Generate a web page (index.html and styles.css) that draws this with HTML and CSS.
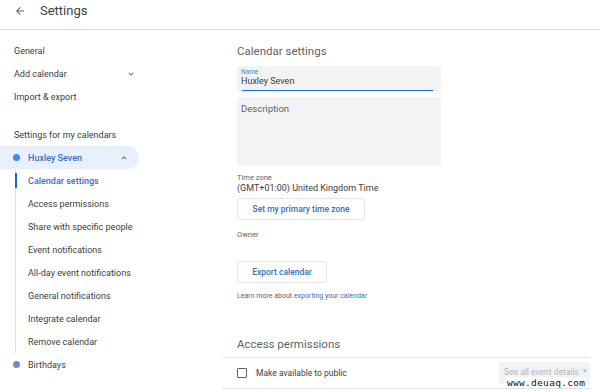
FILE: index.html
```html
<!DOCTYPE html>
<html>
<head>
<meta charset="utf-8">
<link rel="stylesheet" href="styles.css">
</head>
<body>
<header class="topbar">
  <svg class="back" width="12" height="12" viewBox="0 0 24 24"><path d="M20 11H7.83l5.59-5.59L12 4l-8 8 8 8 1.410-1.41L7.83 13H20v-2z" fill="#5f6368"/></svg>
  <span class="title">Settings</span>
</header>
<div class="page">
  <nav class="side">
    <div class="item">General</div>
    <div class="item row">Add calendar <svg class="chev" width="10" height="10" viewBox="0 0 24 24"><path d="M7.41 8.59 12 13.17l4.59-4.58L18 10l-6 6-6-6z" fill="#5f6368"/></svg></div>
    <div class="item">Import &amp; export</div>
    <div class="section">Settings for my calendars</div>
    <div class="cal active"><span class="dot"></span>Huxley Seven<svg class="chev up" width="10" height="10" viewBox="0 0 24 24"><path d="M7.41 15.41 12 10.83l4.59 4.58L18 14l-6-6-6 6z" fill="#5f6368"/></svg></div>
    <div class="sub">
      <div class="subitem current">Calendar settings</div>
      <div class="subitem">Access permissions</div>
      <div class="subitem">Share with specific people</div>
      <div class="subitem">Event notifications</div>
      <div class="subitem">All-day event notifications</div>
      <div class="subitem">General notifications</div>
      <div class="subitem">Integrate calendar</div>
      <div class="subitem">Remove calendar</div>
    </div>
    <div class="cal"><span class="dot purple"></span>Birthdays</div>
  </nav>
  <main class="main">
    <h2 class="heading">Calendar settings</h2>
    <div class="field name">
      <div class="flabel">Name</div>
      <div class="fvalue">Huxley Seven</div>
    </div>
    <div class="field desc">Description</div>
    <div class="label tz">Time zone</div>
    <div class="value">(GMT+01:00) United Kingdom Time</div>
    <button class="btn primary-tz">Set my primary time zone</button>
    <div class="label owner">Owner</div>
    <button class="btn export">Export calendar</button>
    <div class="learn">Learn more about <a>exporting your calendar</a></div>
    <h2 class="heading access">Access permissions</h2>
    <div class="perm">
      <span class="checkbox"></span>
      <span class="perm-text">Make available to public</span>
      <span class="select">See all event details <span class="caret">▾</span></span>
    </div>
  </main>
</div>
<div class="watermark">www.deuaq.com</div>
</body>
</html>
```
FILE: styles.css
```css
* { box-sizing: border-box; }
html, body { margin: 0; padding: 0; background: #fff; }
body {
  font-family: Roboto, "Liberation Sans", Arial, sans-serif;
  color: #3c4043;
  width: 600px;
  height: 392px;
  overflow: hidden;
  position: relative;
}
.topbar {
  height: 30px;
  border-bottom: 1px solid #dadce0;
  display: flex;
  align-items: center;
  padding-left: 14px;
  padding-bottom: 8px;
}
.back { margin-right: 14px; }
.title { font-size: 13px; color: #3c4043; }

.page { display: flex; }
.side { width: 222px; padding-top: 9px; }
.item {
  height: 23px;
  display: flex;
  align-items: center;
  padding-left: 14px;
  font-size: 9px;
  color: #3c4043;
}
.row { width: 136px; justify-content: space-between; }
.section {
  font-size: 9px;
  color: #3c4043;
  padding-left: 14px;
  margin-top: 15px;
  height: 23px;
  display: flex;
  align-items: center;
}
.cal {
  height: 23px;
  display: flex;
  align-items: center;
  padding-left: 13px;
  font-size: 9px;
  color: #3c4043;
  width: 139px;
}
.cal.active {
  background: #e8f0fe;
  border-radius: 0 12px 12px 0;
  color: #3d6ec9;
  font-weight: 500;
  padding-right: 10px;
}
.cal .chev.up { margin-left: auto; }
.dot {
  width: 7px; height: 7px; border-radius: 50%;
  background: #4285f4; margin-right: 8px;
}
.dot.purple { background: #7986cb; }
.sub {
  margin-left: 15px;
  border-left: 1px solid #dadce0;
}
.subitem {
  height: 23px;
  display: flex;
  align-items: center;
  padding-left: 12px;
  font-size: 9px;
  color: #3c4043;
  position: relative;
}
.subitem.current { color: #3d6ec9; font-weight: 500; }
.subitem.current::before {
  content: "";
  position: absolute;
  left: -1px; top: 4px; bottom: 4px;
  width: 2px;
  background: #1967d2;
}

.main { flex: 1; padding-left: 15px; padding-top: 13px; }
.heading {
  font-size: 11.5px;
  font-weight: 400;
  color: #5f6368;
  margin: 0;
  height: 16px;
  line-height: 16px;
}
.field {
  width: 204px;
  background: #f1f3f4;
  border-radius: 3px 3px 0 0;
}
.field.name {
  margin-top: 7px;
  height: 26px;
  padding: 3px 4px 0 4px;
  position: relative;
}
.field.name::after {
  content: "";
  position: absolute;
  left: 5px; right: 8px; bottom: 1px;
  height: 1px;
  background: #1a73e8;
}
.flabel { font-size: 6.5px; color: #5b82d0; line-height: 7px; }
.fvalue { font-size: 9px; color: #3c4043; line-height: 11px; }
.field.desc {
  margin-top: 5px;
  height: 68px;
  padding: 6px 4px;
  font-size: 9.5px;
  color: #5f6368;
}
.label { font-size: 7.5px; color: #5f6368; }
.label.tz { margin-top: 8px; line-height: 10px; }
.value { font-size: 9px; color: #3c4043; line-height: 11px; }
.btn {
  display: block;
  font-family: inherit;
  background: #fff;
  border: 1px solid #e3e5e8;
  border-radius: 3px;
  color: #3a6dbf;
  font-weight: 500;
  font-size: 8.5px;
  height: 22px;
  padding: 0 13px;
}
.primary-tz { margin-top: 4px; width: 128px; }
.label.owner { margin-top: 10px; line-height: 10px; }
.export { margin-top: 21px; width: 90px; }
.learn { font-size: 7px; color: #5f6368; margin-top: 8px; line-height: 10px; }
.learn a { color: #3a6dbf; }
.heading.access { margin-top: 35px; }
.perm {
  margin-left: -15px;
  width: 368px;
  margin-top: 5px;
  border-top: 1px solid #e3e5e8;
  border-bottom: 1px solid #e3e5e8;
  height: 32px;
  display: flex;
  align-items: center;
  padding-left: 15px;
}
.checkbox {
  width: 10px; height: 10px;
  border: 1.5px solid #5f6368;
  border-radius: 1px;
  margin-right: 9px;
}
.perm-text { font-size: 8.5px; color: #3c4043; }
.select {
  margin-left: auto;
  background: #f1f3f4;
  color: #b5b8bc;
  font-size: 8.5px;
  height: 22px;
  width: 91px;
  display: flex;
  align-items: flex-start;
  padding-top: 5px;
  padding-left: 5px;
  border-radius: 3px 3px 0 0;
}
.caret { margin-left: 4px; font-size: 7px; }
.watermark {
  position: absolute;
  left: 506px;
  top: 377px;
  font-family: "DejaVu Sans Mono", monospace;
  font-size: 9.5px;
  line-height: 11px;
  color: #111;
  background: #fff;
  padding: 0 1px;
  letter-spacing: 0.3px;
}
```
